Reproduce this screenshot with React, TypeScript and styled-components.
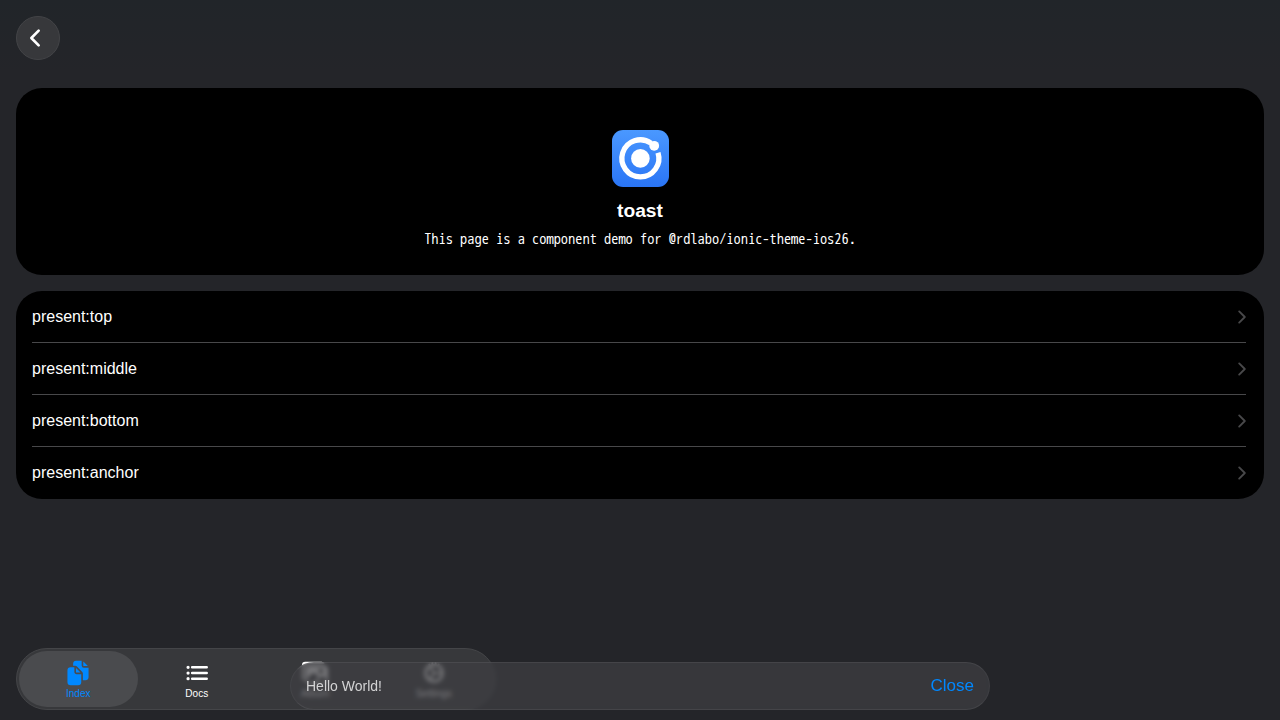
import React from "react";
import styled, { createGlobalStyle, css } from "styled-components";
import {
  IoChevronBack,
  IoChevronForward,
  IoDocuments,
  IoList,
  IoImages,
  IoCog,
} from "react-icons/io5";

const GlobalStyle = createGlobalStyle`
  * { box-sizing: border-box; }
  html, body { margin: 0; padding: 0; background: #242529; }
  body { font-family: "Liberation Sans", Arial, sans-serif; color: #fff; overflow: hidden; }
`;

const Page = styled.div`
  position: relative;
  width: 1280px;
  height: 720px;
  display: flex;
  flex-direction: column;
  background: linear-gradient(#212529 0, #242529 72px, #242529 100%);
`;

const Toolbar = styled.header`
  height: 88px;
  flex: none;
  padding: 16px;
`;

const BackButton = styled.button`
  width: 44px;
  height: 44px;
  padding: 0 6px 0 0;
  display: flex;
  align-items: center;
  justify-content: center;
  border: 1px solid #434447;
  border-radius: 50%;
  background: #37383b;
  color: #fff;
  font-size: 26px;

  svg { flex: none; }
  path { stroke-width: 52px; }
`;

const Content = styled.main`
  flex: 1;
  display: flex;
  flex-direction: column;
  gap: 16px;
  padding: 0 16px;
`;

const Panel = styled.section`
  border-radius: 26px;
  background: #000;
  overflow: hidden;
`;

const Intro = styled(Panel)`
  height: 187px;
  padding-top: 42px;
  display: flex;
  flex-direction: column;
  align-items: center;
`;

const AppIcon = styled.div`
  width: 57px;
  height: 57px;
  border-radius: 11px;
  background: linear-gradient(#4a98ff, #2a75f5);

  svg { display: block; }
`;

const Title = styled.h1`
  margin: 12px 0 0;
  font-size: 19.2px;
  line-height: 24px;
  font-weight: 700;
`;

const Description = styled.p`
  margin: 6px 0 0;
  font-family: "WenQuanYi Zen Hei Mono", "Noto Sans Mono CJK JP", "Noto Sans Mono CJK SC", monospace;
  font-size: 14.4px;
  line-height: 21px;
`;

const List = styled(Panel)`
  height: 208px;
`;

const Item = styled.div`
  height: 52px;
  margin: 0 18px 0 16px;
  display: flex;
  align-items: center;
  justify-content: space-between;
  border-bottom: 1px solid #48484a;
  font-size: 16px;

  &:last-child { border-bottom-color: transparent; }
`;

const Chevron = styled(IoChevronForward)`
  margin-right: -6px;
  font-size: 20px;
  color: #48484a;
`;

const TabBar = styled.nav`
  position: absolute;
  left: 16px;
  top: 648px;
  width: 480px;
  height: 62px;
  padding: 2px;
  display: flex;
  border: 1px solid #444548;
  border-radius: 31px;
  background: #37383b;
`;

const Tab = styled.div<{ $active?: boolean }>`
  flex: 1;
  padding-top: 9px;
  display: flex;
  flex-direction: column;
  align-items: center;
  gap: 2px;
  border-radius: 28px;
  font-size: 10px;
  line-height: 12px;
  ${(p) =>
    p.$active &&
    css`
      background: #4a4b4e;
      color: #0088ff;
    `}

  svg { font-size: 26px; }
`;

const Toast = styled.div`
  position: absolute;
  left: 290px;
  top: 662px;
  width: 700px;
  height: 48px;
  padding: 0 15px;
  display: flex;
  align-items: center;
  justify-content: space-between;
  border: 1px solid;
  border-color: rgba(255, 255, 255, 0.07) rgba(255, 255, 255, 0.04);
  border-radius: 24px;
  background: rgba(62, 63, 66, 0.72);
  backdrop-filter: blur(2px);
`;

const Message = styled.span`
  color: #d3d3d4;
  font-size: 14px;
`;

const CloseButton = styled.button`
  padding: 0;
  border: 0;
  background: none;
  color: #0088ff;
  font-family: inherit;
  font-size: 17px;
`;

const IonicMark = () => (
  <svg width="57" height="57" viewBox="0 0 57 57" fill="none">
    <path
      d="M46 22.7A18.5 18.5 0 1 1 39 13.2"
      stroke="#fff"
      strokeWidth="5.3"
    />
    <circle cx="28.4" cy="28.4" r="9.3" fill="#fff" />
    <circle cx="42.2" cy="15.8" r="4.9" fill="#fff" />
  </svg>
);

const positions = ["top", "middle", "bottom", "anchor"];

const tabs = [
  { label: "Index", icon: <IoDocuments />, active: true },
  { label: "Docs", icon: <IoList /> },
  { label: "Album", icon: <IoImages /> },
  { label: "Settings", icon: <IoCog /> },
];

export default function App() {
  return (
    <Page>
      <GlobalStyle />
      <Toolbar>
        <BackButton aria-label="Back">
          <IoChevronBack />
        </BackButton>
      </Toolbar>
      <Content>
        <Intro>
          <AppIcon>
            <IonicMark />
          </AppIcon>
          <Title>toast</Title>
          <Description>This page is a component demo for @rdlabo/ionic-theme-ios26.</Description>
        </Intro>
        <List>
          {positions.map((position) => (
            <Item key={position}>
              <span>present:{position}</span>
              <Chevron />
            </Item>
          ))}
        </List>
      </Content>
      <TabBar>
        {tabs.map((tab) => (
          <Tab key={tab.label} $active={tab.active}>
            {tab.icon}
            <span>{tab.label}</span>
          </Tab>
        ))}
      </TabBar>
      <Toast role="status">
        <Message>Hello World!</Message>
        <CloseButton>Close</CloseButton>
      </Toast>
    </Page>
  );
}
